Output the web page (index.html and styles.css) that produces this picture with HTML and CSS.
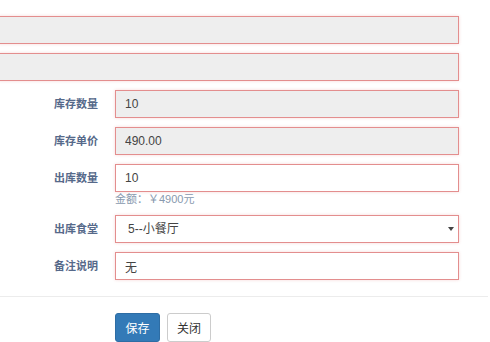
FILE: index.html
```html
<!DOCTYPE html>
<html lang="zh-CN">
<head>
    <meta charset="UTF-8">
    <title>出库</title>
    <link rel="stylesheet" href="styles.css">
</head>
<body>
    <div class="form">
        <div class="row wide">
            <input class="field" type="text" readonly>
        </div>
        <div class="row wide">
            <input class="field" type="text" readonly>
        </div>
        <div class="row">
            <label class="label">库存数量</label>
            <input class="field" type="text" value="10" readonly>
        </div>
        <div class="row">
            <label class="label">库存单价</label>
            <input class="field" type="text" value="490.00" readonly>
        </div>
        <div class="row">
            <label class="label">出库数量</label>
            <div class="control">
                <input class="field" type="text" value="10">
                <div class="help">金额：￥4900元</div>
            </div>
        </div>
        <div class="row">
            <label class="label">出库食堂</label>
            <div class="control select-wrap">
                <select class="field">
                    <option>5--小餐厅</option>
                </select>
            </div>
        </div>
        <div class="row">
            <label class="label">备注说明</label>
            <input class="field" type="text" value="无">
        </div>
    </div>
    <div class="footer">
        <button class="btn btn-primary">保存</button>
        <button class="btn btn-default">关闭</button>
    </div>
</body>
</html>
```

FILE: styles.css
```css
* {
    margin: 0;
    padding: 0;
    box-sizing: border-box;
}
body {
    font-family: 'Liberation Sans', 'Noto Sans CJK SC', sans-serif;
    font-size: 12px;
    color: #333;
    background: #fff;
    overflow: hidden;
}
.form {
    padding-top: 16px;
    width: 459px;
}
.row {
    display: flex;
    align-items: flex-start;
    margin-bottom: 9px;
}
.row.wide .field {
    margin-left: -2px;
    width: 461px;
}
.label {
    width: 98px;
    margin-right: 17px;
    text-align: right;
    font-size: 11px;
    font-weight: bold;
    color: #56698a;
    line-height: 28px;
}
.control {
    flex: 1;
}
.field {
    display: block;
    width: 100%;
    flex: 1;
    height: 28px;
    padding: 0 9px;
    font-family: 'Liberation Sans', 'Noto Sans CJK SC', sans-serif;
    font-size: 12px;
    color: #444;
    background: #fff;
    border: 1px solid #e38e8e;
    border-radius: 0;
    box-shadow: 0 0 3px rgba(224, 126, 126, 0.3);
    outline: none;
}
.field[readonly] {
    background: #eee;
}
.help {
    color: #8899ae;
    font-size: 11px;
    line-height: 14px;
}
.select-wrap {
    position: relative;
}
select.field {
    appearance: none;
    -webkit-appearance: none;
    padding-left: 12px;
}
.select-wrap::after {
    content: "";
    position: absolute;
    right: 5px;
    top: 12px;
    border-left: 3px solid transparent;
    border-right: 3px solid transparent;
    border-top: 4px solid #444;
}
.footer {
    margin-top: 16px;
    width: 488px;
    border-top: 1px solid #ececec;
    padding: 16px 0 0 115px;
    display: flex;
    gap: 7px;
}
.btn {
    height: 29px;
    padding: 0;
    white-space: nowrap;
    font-family: 'Liberation Sans', 'Noto Sans CJK SC', sans-serif;
    font-size: 12px;
    border-radius: 3px;
    border: 1px solid transparent;
    cursor: pointer;
}
.btn-primary {
    background: #337ab7;
    border-color: #2e6da4;
    color: #fff;
    width: 45px;
}
.btn-default {
    background: #fff;
    border-color: #ccc;
    color: #333;
    width: 44px;
}
```
